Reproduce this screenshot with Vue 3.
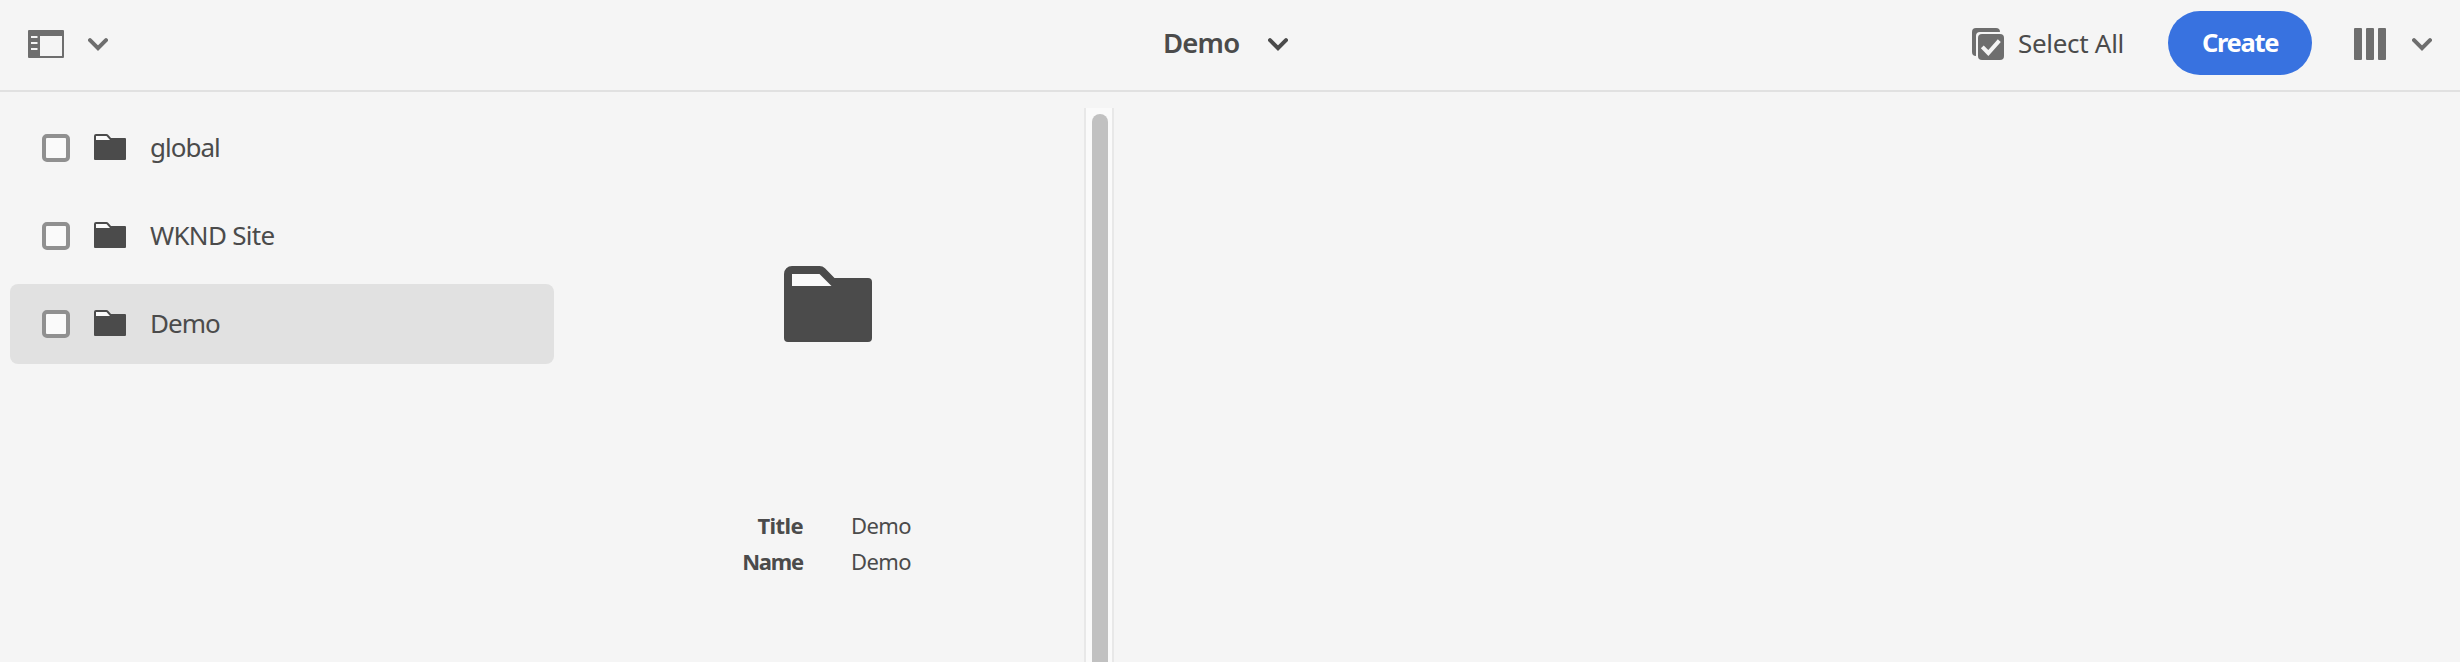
<script setup>
const folders = [
  { name: 'global', cls: 'global' },
  { name: 'WKND Site', cls: 'wknd' },
  { name: 'Demo', cls: 'demo', active: true },
]
const details = [
  { label: 'Title', value: 'Demo', cls: 'loose' },
  { label: 'Name', value: 'Demo', cls: 'tight' },
]
</script>

<template>
  <div class="shell">
    <header class="bar">
      <div class="left">
        <svg class="rail" width="36" height="28" viewBox="0 0 36 28">
          <path fill="#6e6e6e" fill-rule="evenodd" d="M1 0H35a1 1 0 0 1 1 1V27a1 1 0 0 1-1 1H1a1 1 0 0 1-1-1V1a1 1 0 0 1 1-1ZM12 6V26H34V6ZM3 6V8H9.500V6ZM3 12V14H9.500V12ZM3 18V20H9.500V18Z" />
        </svg>
        <svg class="chev" width="20" height="13" viewBox="0 0 20 13"><path d="M2 2.200 10 10.100 18 2.200" /></svg>
      </div>
      <div class="center">
        <span class="title">Demo</span>
        <svg class="chev dark" width="20" height="13" viewBox="0 0 20 13"><path d="M2 2.200 10 10.100 18 2.200" /></svg>
      </div>
      <div class="right">
        <svg class="selicon" width="32" height="32" viewBox="0 0 32 32">
          <path fill="#6e6e6e" d="M4 28V8a4 4 0 0 1 4-4H28A4 4 0 0 0 24 0H4A4 4 0 0 0 0 4V24a4 4 0 0 0 4 4Z" />
          <rect x="6" y="6" width="26" height="26" rx="4" fill="#6e6e6e" />
          <path d="M10.300 18.900 16.300 25 27.300 12.600" fill="none" stroke="#f5f5f5" stroke-width="4" />
        </svg>
        <span class="selall">Select All</span>
        <button class="create"><span>Create</span></button>
        <svg class="cols" width="32" height="32" viewBox="0 0 32 32" fill="#6e6e6e">
          <rect width="8" height="32" rx="1" /><rect x="12" width="8" height="32" rx="1" /><rect x="24" width="8" height="32" rx="1" />
        </svg>
        <svg class="chev" width="20" height="13" viewBox="0 0 20 13"><path d="M2 2.200 10 10.100 18 2.200" /></svg>
      </div>
    </header>
    <main class="body">
      <ul class="list">
        <li v-for="f in folders" :key="f.name" class="row" :class="{ active: f.active }">
          <span class="box"></span>
          <svg class="folder" width="32" height="26" viewBox="0 0 32 26">
            <path fill="#4b4b4b" d="M2 0H12.500a2 2 0 0 1 1.400.6L17 4H31a1 1 0 0 1 1 1V25a1 1 0 0 1-1 1H1a1 1 0 0 1-1-1V2A2 2 0 0 1 2 0Z" />
            <path fill="#fafafa" d="M2 2H12.500L16 6H2Z" />
          </svg>
          <span class="name" :class="f.cls">{{ f.name }}</span>
        </li>
      </ul>
      <section class="preview">
        <svg class="big" width="88" height="76" viewBox="0 0 88 76">
          <path fill="#4b4b4b" d="M8 0H35.500a8 8 0 0 1 5.500 2.300L50.500 12H84a4 4 0 0 1 4 4V72a4 4 0 0 1-4 4H4a4 4 0 0 1-4-4V8A8 8 0 0 1 8 0Z" />
          <path fill="#fafafa" d="M8 8H35.500L47.500 20H8Z" />
        </svg>
        <dl class="meta">
          <template v-for="d in details" :key="d.label">
            <dt :class="d.cls">{{ d.label }}</dt>
            <dd>{{ d.value }}</dd>
          </template>
        </dl>
      </section>
      <div class="scroll"><div class="thumb"></div></div>
    </main>
  </div>
</template>

<style>
body { margin: 0; background: #f5f5f5; }
</style>

<style scoped>
.shell {
  width: 2460px;
  height: 662px;
  overflow: hidden;
  display: flex;
  flex-direction: column;
  background: #f5f5f5;
  color: #4b4b4b;
  font-family: "Noto Sans", "Open Sans", sans-serif;
  font-size: 26px;
}
svg { display: block; flex: none; }
span { white-space: nowrap; }
.bar {
  box-sizing: border-box;
  flex: none;
  height: 92px;
  border-bottom: 2px solid #e1e1e1;
  display: grid;
  grid-template-columns: 1162px 1fr auto;
  align-items: start;
}
.left, .center, .right { display: flex; align-items: center; height: 88px; }
.left { padding-left: 28px; }
.left .chev { margin-left: 24px; }
.chev { fill: none; stroke: #6e6e6e; stroke-width: 4; stroke-linecap: round; stroke-linejoin: miter; }
.chev.dark { stroke: #4b4b4b; }
.title {
  width: 105px;
  margin-left: 1px;
  padding-bottom: 2px;
  font-size: 27.5px;
  font-weight: 600;
  line-height: 40px;
  letter-spacing: -0.8px;
}
.right { padding-right: 28px; }
.selall {
  width: 108px;
  margin-left: 14px;
  margin-right: 42px;
  padding-bottom: 2px;
  line-height: 36px;
  letter-spacing: -0.3px;
}
.create {
  width: 144px;
  height: 64px;
  margin: -2px 42px 0 0;
  padding: 0 0 3px;
  border: 0;
  border-radius: 32px;
  background: #3872e0;
  color: #fff;
  font: 700 25.5px/36px "Noto Sans", "Open Sans", sans-serif;
  letter-spacing: -1.3px;
}
.cols { margin-right: 26px; }
.body { flex: 1; display: flex; min-height: 0; }
.list {
  list-style: none;
  margin: 0;
  padding: 16px 0 0 10px;
  width: 544px;
  display: flex;
  flex-direction: column;
  gap: 8px;
}
.row { display: flex; align-items: center; height: 80px; border-radius: 8px; }
.row.active { background: #e1e1e1; }
.box {
  box-sizing: border-box;
  width: 28px;
  height: 28px;
  margin-left: 32px;
  border: 4px solid #909090;
  border-radius: 5px;
  background: #fafafa;
}
.folder { margin: 0 24px 2px; }
.name { padding-bottom: 3px; line-height: 36px; }
.name.global { letter-spacing: -1px; }
.name.wknd { letter-spacing: -0.7px; }
.name.demo { letter-spacing: -1px; }
.preview { width: 530px; display: flex; flex-direction: column; }
.big { margin: 174px 0 0 230px; }
.meta {
  margin: 165px 0 0;
  display: grid;
  grid-template-columns: 249px auto;
  column-gap: 48px;
  grid-auto-rows: 36px;
  line-height: 36px;
  font-size: 22px;
}
.meta dt { font-weight: 700; text-align: right; }
.meta dt.loose { letter-spacing: -0.6px; }
.meta dt.tight { letter-spacing: -1.2px; }
.meta dd { margin: 0; letter-spacing: -0.6px; }
.scroll {
  box-sizing: border-box;
  width: 30px;
  margin-top: 16px;
  padding: 6px 4px 0 6px;
  border: solid #e8e8e8;
  border-width: 0 2px;
  background: #fafafa;
}
.thumb { height: 600px; border-radius: 8px 8px 0 0; background: #c1c1c1; }
</style>
